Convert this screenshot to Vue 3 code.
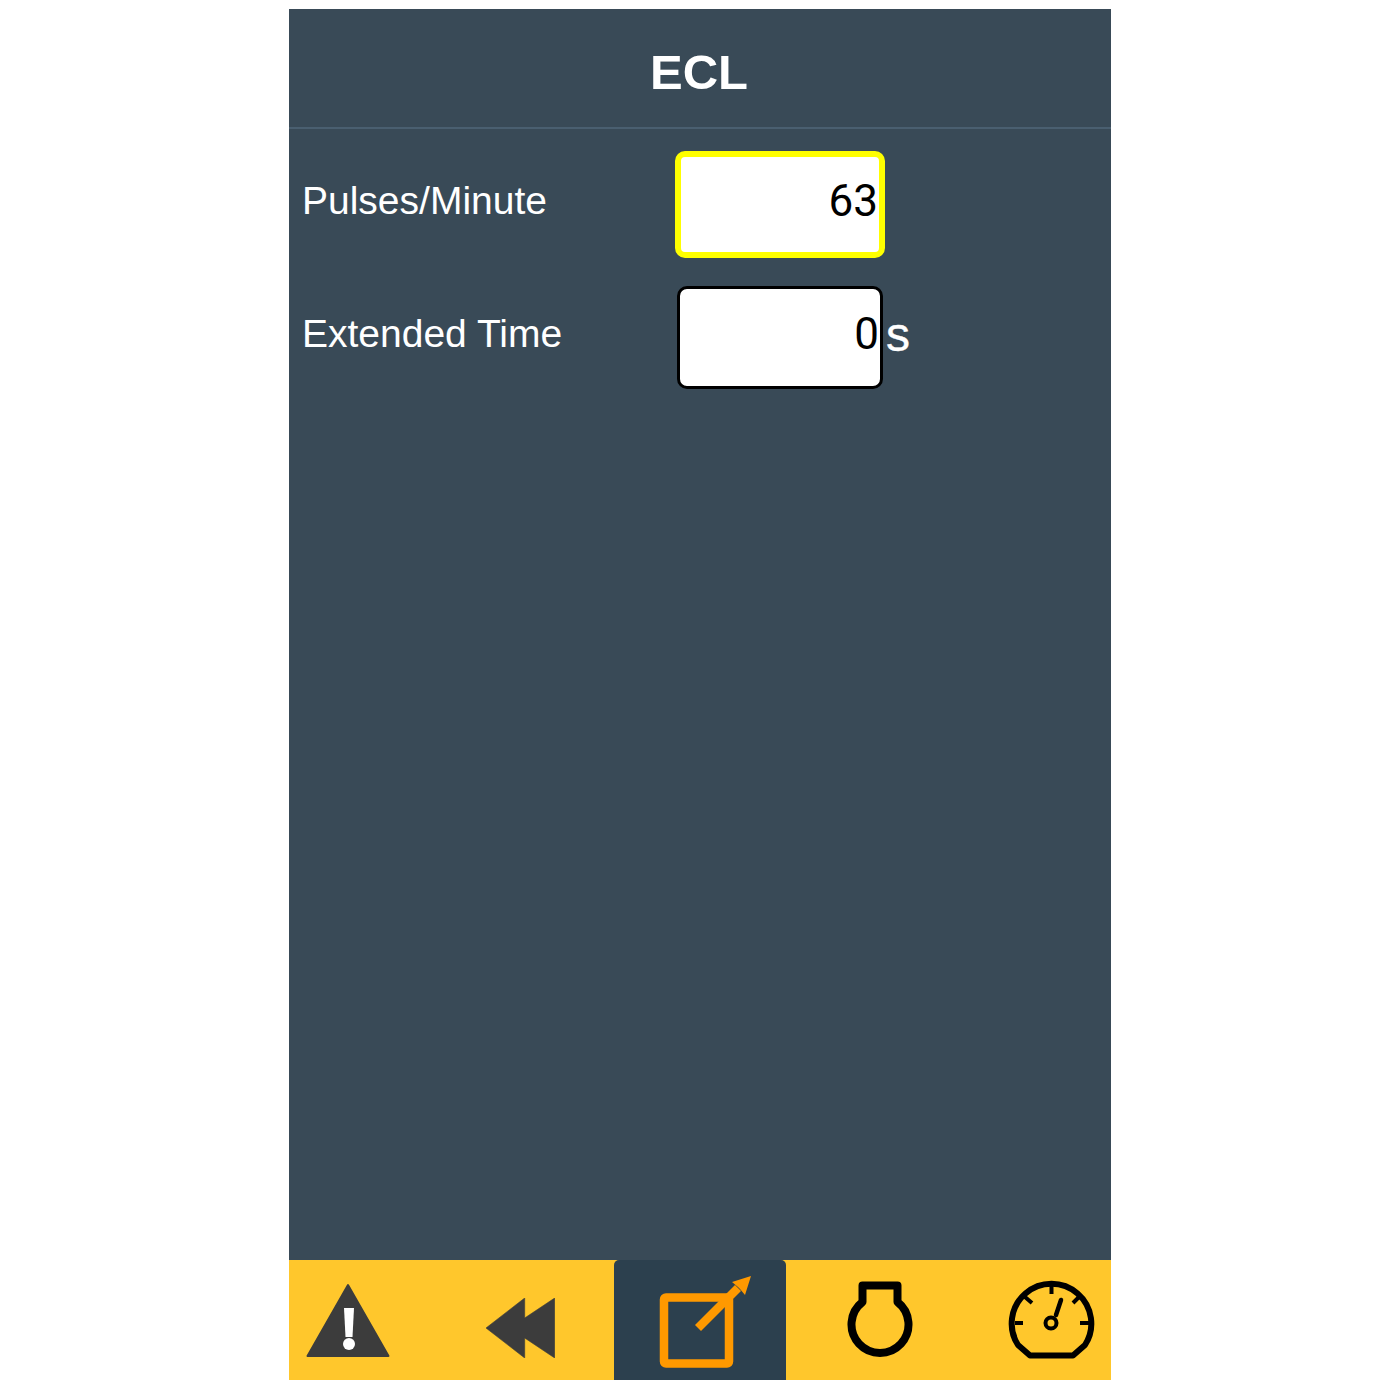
<script setup>
const fields = [
  { label: 'Pulses/Minute', value: '63', focused: true },
  { label: 'Extended Time', value: '0', unit: 's' },
]
</script>

<template>
  <div class="screen">
    <header class="title">ECL</header>

    <main class="form">
      <div v-for="f in fields" :key="f.label" class="row" :class="{ 'row-focused': f.focused }">
        <label class="label">{{ f.label }}</label>
        <div class="input" :class="{ focused: f.focused }">{{ f.value }}</div>
        <span v-if="f.unit" class="unit">{{ f.unit }}</span>
      </div>
    </main>

    <nav class="tabs">
      <div class="tab alarm">
        <svg width="84" height="74" viewBox="306 1283 84 74">
          <path d="M348 1285 L388.500 1356 L307.500 1356 Z" fill="#3c3c3c" stroke="#3c3c3c" stroke-width="2" stroke-linejoin="round" />
          <path d="M344 1308 H354 L352.500 1337 H345.500 Z" fill="#fff" />
          <circle cx="349" cy="1344" r="6" fill="#fff" />
        </svg>
      </div>
      <div class="tab back">
        <svg width="70" height="60" viewBox="485 1298 70 60">
          <path d="M486 1328 L524.700 1298 V1318 L554.700 1298 V1358 L524.700 1338 V1358 Z" fill="#3c3c3c" stroke="#3c3c3c" stroke-width="0.6" stroke-linejoin="round" />
        </svg>
      </div>
      <div class="tab active">
        <svg width="94" height="94" viewBox="658 1275 94 94">
          <rect x="664" y="1297.500" width="65" height="66" rx="2" fill="none" stroke="#f90" stroke-width="8.500" />
          <path d="M698 1328 L738 1288" fill="none" stroke="#f90" stroke-width="8.500" />
          <path d="M751 1276 L732 1282 L738 1287 L740 1289 L745 1295 Z" fill="#f90" />
        </svg>
      </div>
      <div class="tab engine">
        <svg width="67" height="78" viewBox="846 1281 67 78">
          <path d="M862.500 1302 V1285.500 H897.500 V1302 A28.500 28.500 0 1 1 862.500 1302 Z" fill="none" stroke="#000" stroke-width="8" stroke-linejoin="round" />
        </svg>
      </div>
      <div class="tab gauge">
        <svg width="88" height="80" viewBox="1008 1280 88 80">
          <path d="M1030 1355.500 L1018 1345 A39.800 39.800 0 1 1 1085 1345 L1073 1355.500 Z" fill="none" stroke="#000" stroke-width="6" stroke-linejoin="round" />
          <path d="M1051.500 1285 V1294 M1025 1297 L1032 1303 M1079 1297 L1073 1303 M1015 1323 H1023 M1080 1323 H1089" stroke="#000" stroke-width="4" />
          <circle cx="1051" cy="1323" r="5.500" fill="none" stroke="#000" stroke-width="4" />
          <path d="M1056 1315 L1061 1300" stroke="#000" stroke-width="4.500" stroke-linecap="round" />
        </svg>
      </div>
    </nav>
  </div>
</template>

<style scoped>
.screen {
  width: 822px;
  height: 1371px;
  margin: 9px auto 0;
  background: #394a57;
  display: flex;
  flex-direction: column;
  color: #fff;
  font-family: "Liberation Sans", Arial, sans-serif;
}
.title {
  padding: 34px 2px 0 0;
  height: 84px;
  border-bottom: 2px solid #4a5f70;
  text-align: center;
  font-size: 49px;
  line-height: 58px;
  font-weight: 700;
}
.form {
  flex: 1;
  padding: 22px 0 0 13px;
  display: flex;
  flex-direction: column;
  gap: 28px;
}
.row { display: flex; align-items: center; height: 103px; }
.row-focused { height: 107px; }
.label { width: 375px; font-size: 39px; margin-top: -8px; }
.input {
  width: 206px;
  height: 103px;
  box-sizing: border-box;
  border: 3px solid #000;
  border-radius: 10px;
  background: #fff;
  color: #000;
  text-align: right;
  padding: 16px 1px 0 0;
  font: 44px/58px Roboto, sans-serif;
  margin-right: 3px;
}
.input.focused {
  width: 210px;
  height: 107px;
  margin-left: -2px;
  border: 6px solid #ff0;
  padding: 15px 1px 0 0;
}
.unit { font-size: 48px; margin-top: -7px; -webkit-text-stroke: 0.4px #fff; }
.tabs {
  height: 120px;
  background: #ffc72c;
  display: grid;
  grid-template-columns: 120px 205px 172px 205px 120px;
}
.tab { display: flex; align-items: center; justify-content: center; }
.alarm { padding-right: 2px; }
.back { padding: 16px 0 0 17px; }
.active { padding: 4px 0 0 10px; background: #2c404e; border-radius: 5px 5px 0 0; }
.engine { padding-right: 18px; }
.gauge { padding-left: 2px; }
</style>

<style>
html, body { background: #fff; }
</style>
